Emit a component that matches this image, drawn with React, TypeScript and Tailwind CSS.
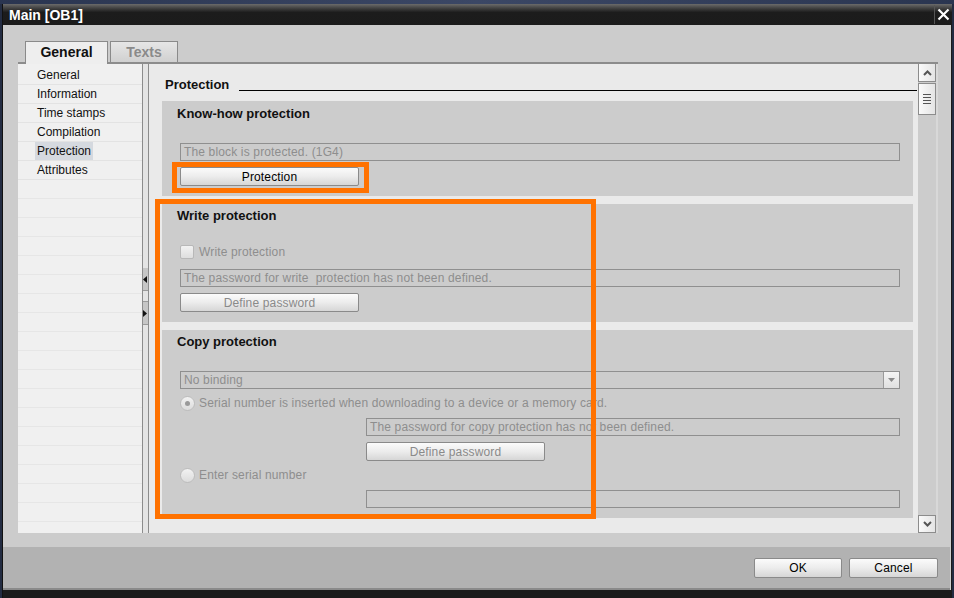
import React from 'react';

const font = "font-['Liberation_Sans',Arial,sans-serif]";

function Input({ text, className = '' }: { text?: string; className?: string }) {
  return (
    <div className={`h-[18px] border border-[#8f8f8f] px-[3px] text-[12px] leading-[16px] tracking-[0.15px] text-[#8e8e8e] whitespace-pre overflow-hidden ${className}`}>
      {text}
    </div>
  );
}

function Btn({ label, dim, className = '' }: { label: string; dim?: boolean; className?: string }) {
  return (
    <div
      className={`h-[19px] border border-[#8a8a8a] rounded-[2px] bg-gradient-to-b from-[#fbfbfb] via-[#ececec] to-[#d6d6d6] flex items-center justify-center text-[12px] tracking-[0.15px] ${
        dim ? 'text-[#8a8a8a]' : 'text-black'
      } ${className}`}
    >
      {label}
    </div>
  );
}

function Radio({ checked }: { checked?: boolean }) {
  return (
    <div className="w-[15px] h-[15px] rounded-full border border-[#bdbdbd] bg-gradient-to-b from-[#f2f2f2] to-[#dcdcdc] flex items-center justify-center">
      {checked && <div className="w-[5px] h-[5px] rounded-full bg-[#9a9a9a]" />}
    </div>
  );
}

const navItems = ['General', 'Information', 'Time stamps', 'Compilation', 'Protection', 'Attributes'];

export default function App() {
  return (
    <div className={`relative w-[954px] h-[598px] overflow-hidden bg-[#232c42] flex flex-col ${font}`}>
      <div className="h-[4px] bg-gradient-to-r from-[#2a3550] via-[#3b4765] to-[#2a3550]" />
      <div className="flex-1 flex ml-[2px] mr-[2px]">
        <div className="w-[1px] bg-[#111]" />
        <div className="flex-1 flex flex-col">
          {/* title bar */}
          <div className="h-[21px] flex items-center bg-gradient-to-b from-[#6b6b6b] via-[#1c1c1c] via-40% to-[#1b1b1b]">
            <span className="ml-[6px] text-white font-bold text-[14px] leading-none">Main [OB1]</span>
            <div className="flex-1" />
            <div className="w-[17px] h-[19px] mr-[1px] border-l border-[#555] flex items-center justify-center">
              <svg width="13" height="13" viewBox="0 0 13 13">
                <path d="M1.5 1.5 L11.5 11.5 M11.5 1.5 L1.5 11.5" stroke="#fff" strokeWidth="2.2" />
              </svg>
            </div>
          </div>

          {/* body */}
          <div className="flex-1 flex border-r border-[#1b1b1b]">
            <div className="flex-1 flex flex-col bg-[#cccccc]">
              <div className="h-[16px]" />
              {/* tabs */}
              <div className="flex h-[21px] pl-[22px] gap-[2px] relative z-10">
                <div className="w-[83px] h-[23px] border border-b-0 border-[#8a8a8a] bg-[#eeeeee] flex items-center justify-center pb-[2px] text-[14px] font-bold text-[#111]">
                  General
                </div>
                <div className="w-[68px] h-[21px] border border-b-0 border-[#8a8a8a] bg-gradient-to-b from-[#e6e6e6] to-[#d0d0d0] flex items-center justify-center text-[14px] font-bold text-[#8a8a8a]">
                  Texts
                </div>
              </div>
              {/* tab content */}
              <div className="ml-[15px] w-[920px] h-[471px] border-t-2 border-[#8c8c8c] flex">
                {/* nav list */}
                <div className="w-[124px] bg-[#f0f0f0] pt-[2px] flex flex-col overflow-hidden">
                  {navItems.map((n) => (
                    <div key={n} className="h-[19px] shrink-0 border-b border-[#e3e3e3] flex items-center pl-[17px]">
                      <span
                        className={`text-[12px] leading-[18px] px-[2px] text-[#111] ${
                          n === 'Protection' ? 'bg-[#d5d9df]' : ''
                        }`}
                      >
                        {n}
                      </span>
                    </div>
                  ))}
                  {Array.from({ length: 18 }).map((_, i) => (
                    <div key={i} className="h-[19px] border-b border-[#e6e6e6] shrink-0" />
                  ))}
                </div>
                {/* splitter */}
                <div className="w-[7px] bg-[#e4e4e4] border-l border-r border-[#8c8c8c] flex flex-col">
                  <div className="h-[204px]" />
                  <div className="h-[23px] bg-[#c6c6c6] border-b border-[#9a9a9a] flex items-center">
                    <svg width="5" height="7" viewBox="0 0 5 7"><path d="M4 0 L0 3.5 L4 7 Z" fill="#111" /></svg>
                  </div>
                  <div className="h-[10px]" />
                  <div className="h-[24px] bg-[#c6c6c6] border-t border-b border-[#9a9a9a] flex items-center">
                    <svg width="5" height="7" viewBox="0 0 5 7"><path d="M0 0 L4 3.5 L0 7 Z" fill="#111" /></svg>
                  </div>
                </div>
                {/* right panel */}
                <div className="w-[769px] bg-[#eaeaea] overflow-hidden">
                  <div className="pt-[13px] pl-[16px] pr-[1px] h-[37px]">
                    <div className="flex items-end h-[16px]">
                      <span className="text-[13px] font-bold leading-[16px] text-[#111]">Protection</span>
                      <div className="flex-1 ml-[10px] mb-[2px] border-b border-black" />
                    </div>
                  </div>

                  {/* know-how */}
                  <div className="ml-[13px] w-[751px] bg-[#cccccc] pt-[5px] pb-[10px] pl-[18px] pr-[13px]">
                    <div className="-ml-[3px] text-[13px] font-bold leading-[16px] text-[#111]">Know-how protection</div>
                    <Input text="The block is protected. (1G4)" className="mt-[21px]" />
                    <Btn label="Protection" className="mt-[6px] w-[179px]" />
                  </div>
                  <div className="h-[8px]" />

                  {/* write */}
                  <div className="ml-[13px] w-[751px] bg-[#cccccc] pt-[4px] pb-[10px] pl-[18px] pr-[13px]">
                    <div className="-ml-[3px] text-[13px] font-bold leading-[16px] text-[#111]">Write protection</div>
                    <div className="mt-[20px] h-[16px] flex items-center gap-[5px]">
                      <div className="w-[14px] h-[14px] rounded-[2px] border border-[#b8b8b8] bg-gradient-to-b from-[#f2f2f2] to-[#dedede]" />
                      <span className="text-[12px] tracking-[0.15px] text-[#8e8e8e]">Write protection</span>
                    </div>
                    <Input text="The password for write  protection has not been defined." className="mt-[9px]" />
                    <Btn label="Define password" dim className="mt-[6px] w-[179px]" />
                  </div>
                  <div className="h-[8px]" />

                  {/* copy */}
                  <div className="ml-[13px] w-[751px] bg-[#cccccc] pt-[4px] pb-[10px] pl-[18px] pr-[13px]">
                    <div className="-ml-[3px] text-[13px] font-bold leading-[16px] text-[#111]">Copy protection</div>
                    <div className="mt-[21px] h-[18px] border border-[#8f8f8f] flex">
                      <span className="flex-1 px-[3px] text-[12px] leading-[16px] tracking-[0.15px] text-[#8e8e8e]">No binding</span>
                      <div className="w-[16px] border-l border-[#9a9a9a] bg-gradient-to-b from-[#f4f4f4] to-[#e0e0e0] flex items-center justify-center">
                        <svg width="7" height="4" viewBox="0 0 7 4"><path d="M0 0 L7 0 L3.5 4 Z" fill="#8a8a8a" /></svg>
                      </div>
                    </div>
                    <div className="mt-[6px] h-[16px] flex items-center gap-[4px]">
                      <Radio checked />
                      <span className="text-[12px] tracking-[0.15px] text-[#8e8e8e] whitespace-nowrap">
                        Serial number is inserted when downloading to a device or a memory card.
                      </span>
                    </div>
                    <div className="pl-[186px]">
                      <Input text="The password for copy protection has not been defined." className="mt-[7px]" />
                      <Btn label="Define password" dim className="mt-[6px] w-[179px]" />
                    </div>
                    <div className="mt-[6px] h-[16px] flex items-center gap-[4px]">
                      <Radio />
                      <span className="text-[12px] tracking-[0.15px] text-[#8e8e8e]">Enter serial number</span>
                    </div>
                    <div className="pl-[186px]">
                      <Input className="mt-[7px]" />
                    </div>
                  </div>
                </div>
                {/* scrollbar */}
                <div className="w-[18px] bg-[#cccccc] flex flex-col">
                  <div className="h-[18px] border border-[#8c8c8c] border-t-0 bg-gradient-to-r from-[#fafafa] to-[#e4e4e4] flex items-center justify-center">
                    <svg width="9" height="6" viewBox="0 0 9 6"><path d="M1 5 L4.5 1.5 L8 5" stroke="#555" strokeWidth="2" fill="none" /></svg>
                  </div>
                  <div className="mt-[1px] h-[32px] border border-[#8c8c8c] bg-gradient-to-r from-[#fafafa] to-[#e4e4e4] flex flex-col items-center justify-center gap-[2px]">
                    {[0, 1, 2, 3].map((i) => (
                      <div key={i} className="w-[8px] h-[1px] bg-[#555]" />
                    ))}
                  </div>
                  <div className="flex-1" />
                  <div className="h-[18px] border border-[#8c8c8c] bg-gradient-to-r from-[#fafafa] to-[#e4e4e4] flex items-center justify-center">
                    <svg width="9" height="6" viewBox="0 0 9 6"><path d="M1 1 L4.5 4.5 L8 1" stroke="#555" strokeWidth="2" fill="none" /></svg>
                  </div>
                </div>
                <div className="w-[2px] bg-[#d8d8d8]" />
              </div>
              <div className="h-[14px]" />
              {/* footer */}
              <div className="h-[41px] bg-[#b2b2b2] flex justify-end gap-[7px] pt-[11px] pr-[12px]">
                <Btn label="OK" className="w-[88px] h-[20px]" />
                <Btn label="Cancel" className="w-[89px] h-[20px]" />
              </div>
              <div className="h-[2px] bg-[#8a8a8a]" />
            </div>
            <div className="w-[1px] bg-[#cfcfcf]" />
          </div>
          <div className="h-[8px] bg-[#1b1b1b]" />
        </div>
      </div>

      {/* highlight boxes */}
      <div className="absolute left-[172px] top-[162px] w-[197px] h-[31px] border-[5px] border-[#ff7200]" />
      <div className="absolute left-[155px] top-[199px] w-[441px] h-[320px] border-[5px] border-[#ff7200]" />
    </div>
  );
}
